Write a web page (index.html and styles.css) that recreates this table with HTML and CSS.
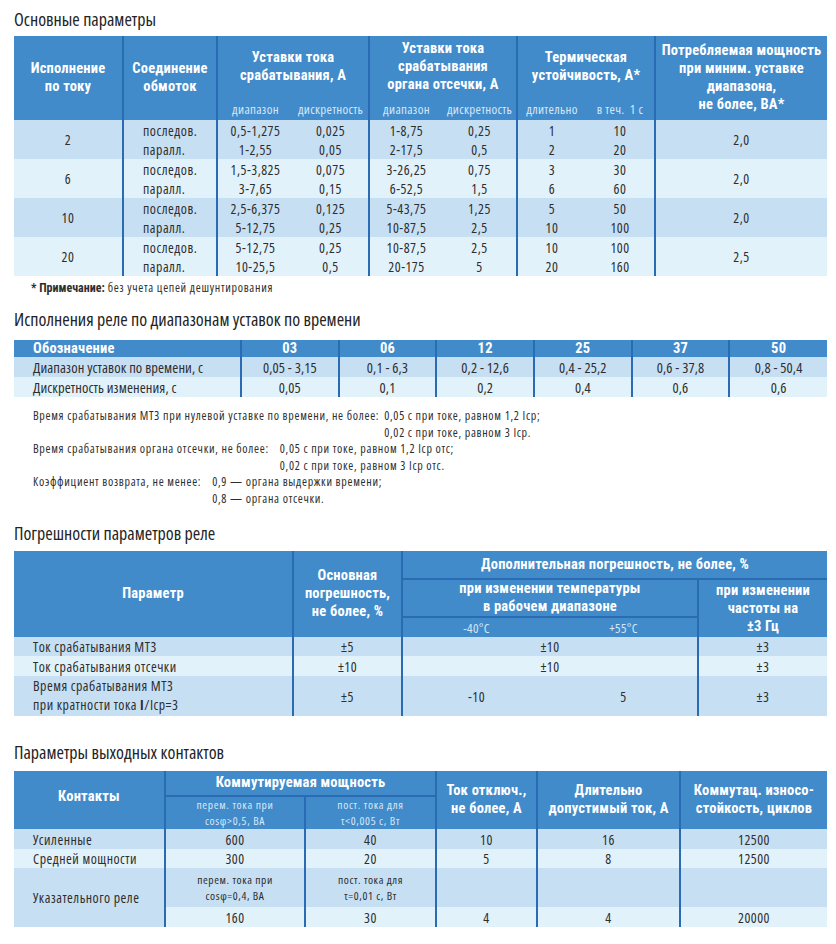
FILE: index.html
```html
<!DOCTYPE html>
<html lang="ru">
<head>
<meta charset="utf-8">
<title>Параметры реле</title>
<link rel="stylesheet" href="styles.css">
</head>
<body>
<div class="page">

<h2 class="title t-first">Основные параметры</h2>
<table class="t t1">
<colgroup>
<col class="w109"><col class="w94"><col class="w76"><col class="w76"><col class="w74"><col class="w74"><col class="w69"><col class="w69"><col class="w172">
</colgroup>
<thead>
<tr class="h61">
<th rowspan="2">Исполнение<br>по току</th>
<th rowspan="2" class="bl">Соединение<br>обмоток</th>
<th colspan="2" class="bl">Уставки тока<br>срабатывания, А</th>
<th colspan="2" class="bl">Уставки тока<br>срабатывания<br>органа отсечки, А</th>
<th colspan="2" class="bl">Термическая<br>устойчивость, А*</th>
<th rowspan="2" class="bl">Потребляемая мощность<br>при миним. уставке<br>диапазона,<br>не более, ВА*</th>
</tr>
<tr class="h23">
<th class="sub bl">диапазон</th><th class="sub">дискретность</th>
<th class="sub bl">диапазон</th><th class="sub">дискретность</th>
<th class="sub bl">длительно</th><th class="sub">в теч.&nbsp; 1 с</th>
</tr>
</thead>
<tbody>
<tr class="dk r20"><td rowspan="2">2</td><td class="bl l">последов.</td><td class="bl">0,5-1,275</td><td>0,025</td><td class="bl">1-8,75</td><td>0,25</td><td class="bl">1</td><td>10</td><td rowspan="2" class="bl">2,0</td></tr>
<tr class="dk r19"><td class="bl l">паралл.</td><td class="bl">1-2,55</td><td>0,05</td><td class="bl">2-17,5</td><td>0,5</td><td class="bl">2</td><td>20</td></tr>
<tr class="lt r20"><td rowspan="2">6</td><td class="bl l">последов.</td><td class="bl">1,5-3,825</td><td>0,075</td><td class="bl">3-26,25</td><td>0,75</td><td class="bl">3</td><td>30</td><td rowspan="2" class="bl">2,0</td></tr>
<tr class="lt r19"><td class="bl l">паралл.</td><td class="bl">3-7,65</td><td>0,15</td><td class="bl">6-52,5</td><td>1,5</td><td class="bl">6</td><td>60</td></tr>
<tr class="dk r20"><td rowspan="2">10</td><td class="bl l">последов.</td><td class="bl">2,5-6,375</td><td>0,125</td><td class="bl">5-43,75</td><td>1,25</td><td class="bl">5</td><td>50</td><td rowspan="2" class="bl">2,0</td></tr>
<tr class="dk r19"><td class="bl l">паралл.</td><td class="bl">5-12,75</td><td>0,25</td><td class="bl">10-87,5</td><td>2,5</td><td class="bl">10</td><td>100</td></tr>
<tr class="lt r20"><td rowspan="2">20</td><td class="bl l">последов.</td><td class="bl">5-12,75</td><td>0,25</td><td class="bl">10-87,5</td><td>2,5</td><td class="bl">10</td><td>100</td><td rowspan="2" class="bl">2,5</td></tr>
<tr class="lt r19"><td class="bl l">паралл.</td><td class="bl">10-25,5</td><td>0,5</td><td class="bl">20-175</td><td>5</td><td class="bl">20</td><td>160</td></tr>
</tbody>
</table>
<p class="footnote"><b>* Примечание:</b> без учета цепей дешунтирования</p>

<h2 class="title t-second">Исполнения реле по диапазонам уставок по времени</h2>
<table class="t t2">
<colgroup><col class="w227"><col><col><col><col><col><col></colgroup>
<thead>
<tr class="h17">
<th class="l">Обозначение</th><th class="bl">03</th><th class="bl">06</th><th class="bl">12</th><th class="bl">25</th><th class="bl">37</th><th class="bl">50</th>
</tr>
</thead>
<tbody>
<tr class="dk r20"><td class="l">Диапазон уставок по времени, с</td><td class="bl">0,05 - 3,15</td><td class="bl">0,1 - 6,3</td><td class="bl">0,2 - 12,6</td><td class="bl">0,4 - 25,2</td><td class="bl">0,6 - 37,8</td><td class="bl">0,8 - 50,4</td></tr>
<tr class="lt r20"><td class="l">Дискретность изменения, с</td><td class="bl">0,05</td><td class="bl">0,1</td><td class="bl">0,2</td><td class="bl">0,4</td><td class="bl">0,6</td><td class="bl">0,6</td></tr>
</tbody>
</table>
<div class="notes">
<div class="note"><span class="nl">Время срабатывания МТЗ при нулевой уставке по времени, не более:</span><span class="nv">0,05 с при токе, равном 1,2 Iср;<br>0,02 с при токе, равном 3 Iср.</span></div>
<div class="note"><span class="nl">Время срабатывания органа отсечки, не более:</span><span class="nv nv2">0,05 с при токе, равном 1,2 Iср отс;<br>0,02 с при токе, равном 3 Iср отс.</span></div>
<div class="note"><span class="nl">Коэффициент возврата, не менее:</span><span class="nv nv2">0,9 — органа выдержки времени;<br>0,8 — органа отсечки.</span></div>
</div>

<h2 class="title t-third">Погрешности параметров реле</h2>
<table class="t t3">
<colgroup><col class="w279"><col class="w109"><col class="w148"><col class="w148"><col class="w129"></colgroup>
<thead>
<tr class="h28">
<th rowspan="3">Параметр</th>
<th rowspan="3" class="bl">Основная<br>погрешность,<br>не более, %</th>
<th colspan="3" class="bl bb">Дополнительная погрешность, не более, %</th>
</tr>
<tr class="h38">
<th colspan="2" class="bl bb">при изменении температуры<br>в рабочем диапазоне</th>
<th rowspan="2" class="bl">при изменении<br>частоты на<br>±3 Гц</th>
</tr>
<tr class="h20">
<th class="sub bl">-40°C</th><th class="sub">+55°C</th>
</tr>
</thead>
<tbody>
<tr class="dk r19"><td class="l">Ток срабатывания МТЗ</td><td class="bl">±5</td><td colspan="2" class="bl">±10</td><td class="bl">±3</td></tr>
<tr class="lt r20"><td class="l">Ток срабатывания отсечки</td><td class="bl">±10</td><td colspan="2" class="bl">±10</td><td class="bl">±3</td></tr>
<tr class="dk r19"><td class="l">Время срабатывания МТЗ</td><td rowspan="2" class="bl">±5</td><td rowspan="2" class="bl">-10</td><td rowspan="2">5</td><td rowspan="2" class="bl">±3</td></tr>
<tr class="dk r19"><td class="l lift">при кратности тока <b>I</b>/Iср=3</td></tr>
</tbody>
</table>

<h2 class="title t-fourth">Параметры выходных контактов</h2>
<table class="t t4">
<colgroup><col class="w151"><col class="w140"><col class="w131"><col class="w101"><col class="w143"><col class="w147"></colgroup>
<thead>
<tr class="h25">
<th rowspan="3" class="up">Контакты</th>
<th colspan="2" class="bl bb">Коммутируемая мощность</th>
<th rowspan="3" class="bl">Ток отключ.,<br>не более, А</th>
<th rowspan="3" class="bl">Длительно<br>допустимый ток, А</th>
<th rowspan="3" class="bl">Коммутац. износо-<br>стойкость, циклов</th>
</tr>
<tr class="h16">
<th class="sub tiny bl va-b">перем. тока при</th>
<th class="sub tiny bl va-b">пост. тока для</th>
</tr>
<tr class="h16">
<th class="sub tiny bl va-t">cosφ&gt;0,5, ВА</th>
<th class="sub tiny bl va-t">τ&lt;0,005 с, Вт</th>
</tr>
</thead>
<tbody>
<tr class="dk r20"><td class="l">Усиленные</td><td class="bl">600</td><td class="bl">40</td><td class="bl">10</td><td class="bl">16</td><td class="bl">12500</td></tr>
<tr class="lt r19"><td class="l">Средней мощности</td><td class="bl">300</td><td class="bl">20</td><td class="bl">5</td><td class="bl">8</td><td class="bl">12500</td></tr>
<tr class="dk r20"><td rowspan="3" class="l">Указательного реле</td><td class="bl small va-b">перем. тока при</td><td class="bl small va-b">пост. тока для</td><td rowspan="2" class="bl"></td><td rowspan="2" class="bl"></td><td rowspan="2" class="bl"></td></tr>
<tr class="dk r19"><td class="bl small va-t">cosφ=0,4, ВА</td><td class="bl small va-t">τ=0,01 с, Вт</td></tr>
<tr class="lt r20"><td class="bl">160</td><td class="bl">30</td><td class="bl">4</td><td class="bl">4</td><td class="bl">20000</td></tr>
</tbody>
</table>

</div>
</body>
</html>
```

FILE: styles.css
```css
* { box-sizing: border-box; }

body {
  margin: 0;
  background: #ffffff;
  font-family: "Open Sans", Roboto, sans-serif;
  font-stretch: 75%;
  color: #2e2e2e;
}

.page {
  width: 827px;
  padding-left: 14px;
}

.title {
  margin: 0;
  font-size: 18px;
  line-height: 22px;
  font-weight: normal;
  color: #232323;
}

.t-first { padding-top: 8px; margin-bottom: 6px; }
.t-second { margin-top: 13px; margin-bottom: 10px; }
.t-third { margin-top: 15px; margin-bottom: 7px; }
.t-fourth { margin-top: 25px; margin-bottom: 8px; }

.t {
  width: 813px;
  border-collapse: collapse;
  table-layout: fixed;
}

.t th,
.t td {
  padding: 0;
  text-align: center;
  vertical-align: middle;
  white-space: nowrap;
}

.t thead th {
  background: #418bcb;
  color: #ffffff;
  font-family: Roboto, "Open Sans", sans-serif;
  font-weight: bold;
  font-size: 14.5px;
  line-height: 18px;
  letter-spacing: 0.2px;
}

.t thead th.sub {
  font-family: "Open Sans", Roboto, sans-serif;
  font-weight: normal;
  font-size: 13px;
  color: #d6e7f6;
  line-height: 18px;
  letter-spacing: 0.3px;
}

.t thead th.tiny {
  font-size: 11.5px;
  line-height: 16px;
  letter-spacing: 0.7px;
}

.t td {
  font-size: 13.9px;
  line-height: 19px;
  letter-spacing: 0.5px;
  color: #2e2e2e;
}

.dk td { background: #c7dff3; }
.lt td { background: #e2f2fb; }

.bl { border-left: 2px solid #2a6cb3; }
.bb { border-bottom: 2px solid #2a6cb3; }

.t th.l,
.t td.l {
  text-align: left;
  padding-left: 19px;
}

.t td.small {
  font-size: 11.5px;
  line-height: 16px;
  letter-spacing: 0.6px;
}

.t th.va-b,
.t td.va-b { vertical-align: bottom; }
.t th.va-t,
.t td.va-t { vertical-align: top; }

.t td.lift { padding-bottom: 2px; }
.t th.up { padding-bottom: 6px; }

.h61 { height: 61px; }
.h23 { height: 23px; }
.h17 { height: 17px; }
.h16 { height: 16px; }
.h28 { height: 28px; }
.h38 { height: 38px; }
.h20 { height: 20px; }
.h25 { height: 25px; }
.r19 { height: 19px; }
.r20 { height: 20px; }

.w69 { width: 69px; }
.w74 { width: 74px; }
.w76 { width: 76px; }
.w94 { width: 94px; }
.w101 { width: 101px; }
.w109 { width: 109px; }
.w129 { width: 129px; }
.w131 { width: 131px; }
.w140 { width: 140px; }
.w143 { width: 143px; }
.w147 { width: 147px; }
.w148 { width: 148px; }
.w151 { width: 151px; }
.w172 { width: 172px; }
.w227 { width: 227px; }
.w279 { width: 279px; }

.t2 thead th { font-size: 14.5px; line-height: 17px; }
.t2 td { font-size: 14.5px; letter-spacing: 0.1px; }

.footnote {
  margin: 5px 0 0 17px;
  font-size: 12px;
  line-height: 14px;
  letter-spacing: 0.7px;
  color: #2e2e2e;
}

.footnote b {
  font-family: Roboto, sans-serif;
  letter-spacing: 0;
}

.notes {
  margin-top: 11px;
  padding-left: 19px;
  font-size: 12px;
  line-height: 16.5px;
  letter-spacing: 0.7px;
  color: #2e2e2e;
}

.note {
  display: flex;
  gap: 5px;
}

.nv2 { margin-left: 6px; }
```
